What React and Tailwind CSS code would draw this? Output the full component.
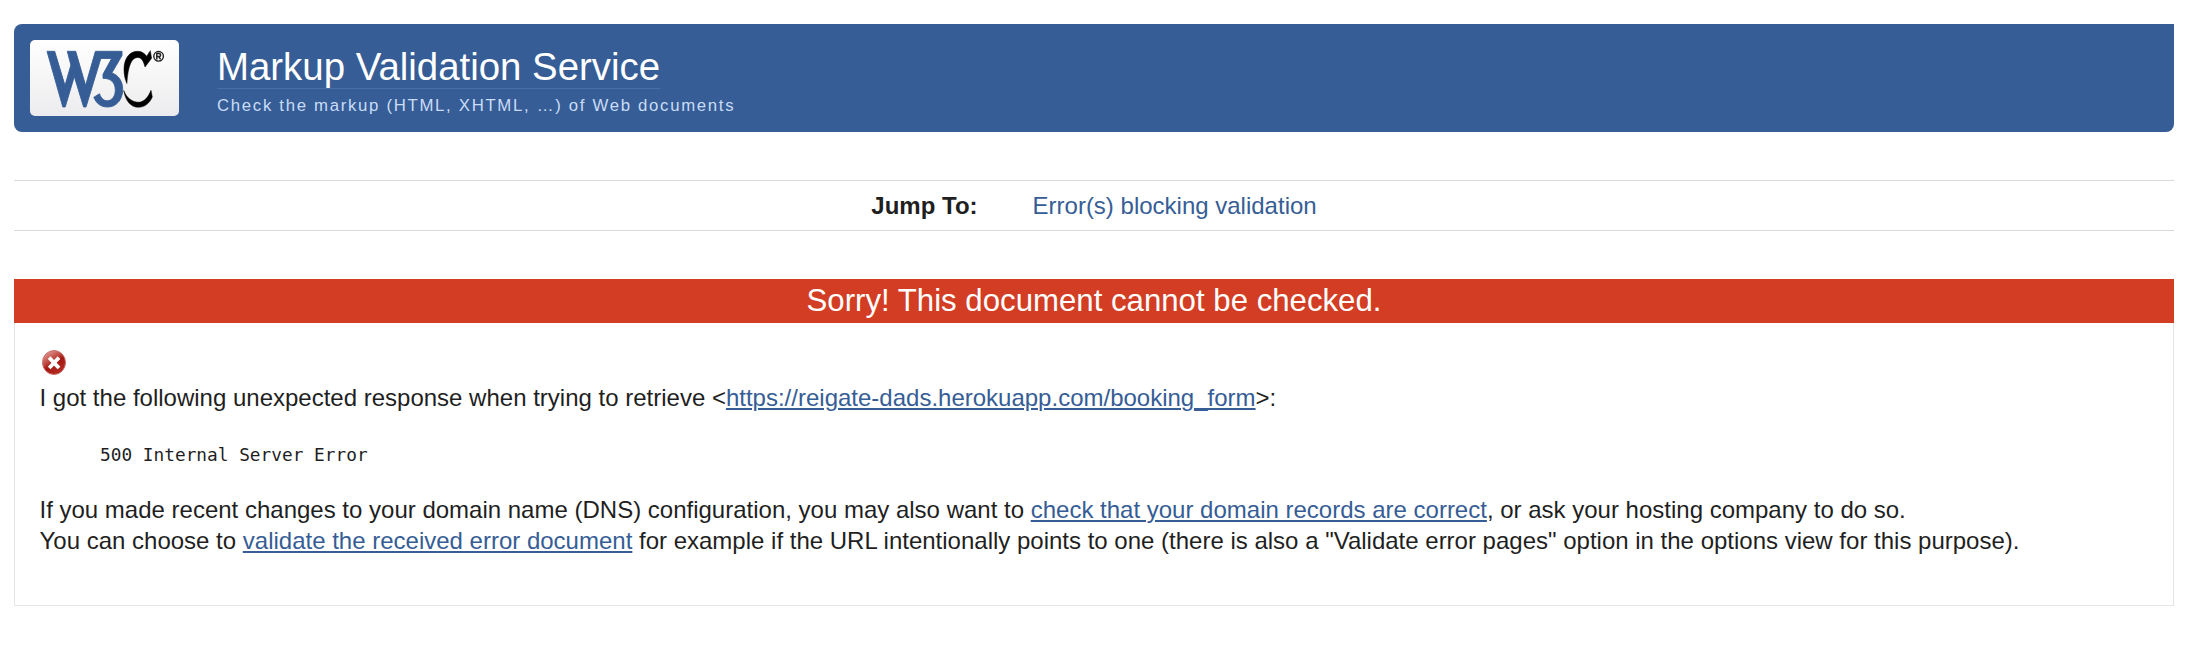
function W3CLogo() {
  return (
    <svg viewBox="0 0 149 76" className="h-[76px] w-[149px] shrink-0" role="img" aria-label="W3C">
      <defs>
        <linearGradient id="plate" x1="0" y1="0" x2="0" y2="1">
          <stop offset="0" stopColor="#ffffff" />
          <stop offset="1" stopColor="#ececee" />
        </linearGradient>
      </defs>
      <rect width="149" height="76" rx="5" fill="url(#plate)" />
      <path
        fill="#365d95"
        stroke="#365d95"
        strokeWidth="0.900"
        strokeLinejoin="round"
        d="M17 11.300H24.700L35 45.500 40.900 25 37.300 11.300H45.700L55.600 45.500 65.400 11.300H92V15.500L81.800 33C88.500 35 92.700 41.500 92.700 49.500 92.700 59.500 86.500 67 77.500 67 71 67 66.500 63.700 63.800 57.300L69.500 53.800C71.200 58.500 73.800 60.800 77.300 60.800 81.800 60.800 85.300 56.300 85.300 50.300 85.300 42.500 81 38.300 73 38.300V34.300L81.600 18.500H70.800L56 67H53.600L44.300 36.500 35.200 67H32.800z"
      />
      <path
        fill="#000"
        stroke="#000"
        strokeWidth="0.500"
        d="M120.300 10.700L121.600 18.300 115 27C113.500 21 111.500 17.500 107.800 17.500 101.500 17.500 98 26 96.900 43.500 94.500 38 94 33.500 94 29 94 18.500 99.500 11.300 107.500 11.300 112 11.300 114.500 13.300 116.700 16.300z"
      />
      <path
        fill="#000"
        stroke="#000"
        strokeWidth="0.500"
        d="M93.700 50.500C97 58.500 102.500 62.200 108.500 62.200 114 62.200 118 57.500 121 50.300L122.300 57C119.500 63.500 114.500 67.300 108.300 67.300 100.500 67.300 95.500 60.500 93.700 50.500z"
      />
      <circle cx="128.600" cy="16.300" r="4.800" fill="none" stroke="#222" strokeWidth="1.400" />
      <path d="M126.800 19.400v-6h2.200a1.500 1.500 0 0 1 0 3.200h-2.200m2 0 1.800 2.800" fill="none" stroke="#222" strokeWidth="1.500" />
    </svg>
  );
}

function ErrorIcon() {
  return (
    <svg viewBox="0 0 24 25" className="h-[25px] w-6" role="img" aria-label="Error">
      <defs>
        <linearGradient id="ball" x1="0.15" y1="0.05" x2="0.7" y2="0.9">
          <stop offset="0" stopColor="#e59a95" />
          <stop offset="0.42" stopColor="#bd4740" />
          <stop offset="0.6" stopColor="#a51712" />
          <stop offset="1" stopColor="#b32a22" />
        </linearGradient>
      </defs>
      <ellipse cx="12" cy="12.500" rx="11.500" ry="12" fill="url(#ball)" stroke="#c9706b" strokeWidth="1" />
      <path d="M8.500 9l7.200 7.600M15.700 9l-7.200 7.600" stroke="#fff" strokeWidth="3.800" strokeLinecap="square" />
    </svg>
  );
}

function TextLink({ children }) {
  return (
    <a href="#" className="text-[#365d95] underline decoration-2 underline-offset-2">
      {children}
    </a>
  );
}

export default function App() {
  return (
    <div className="min-h-[652px] bg-white pt-6 pr-5 pl-3.5 font-['Liberation_Sans',Arial,sans-serif] text-2xl leading-[31px] text-[#1f1f1f]">
      <header className="flex h-[108px] items-start rounded-l-[8px] rounded-br-[8px] bg-[#365d95] pt-4 pl-4">
        <W3CLogo />
        <div className="ml-[38px] flex flex-col items-start">
          <h1 className="mt-1 h-[45px] border-b border-[#4a6fa8] text-[38.4px] leading-[46px] text-white">
            Markup Validation Service
          </h1>
          <p className="mt-[7px] text-[16.8px] leading-5 tracking-[0.1em] text-[#c9dcf8]">
            Check the markup (HTML, XHTML, …) of Web documents
          </p>
        </div>
      </header>

      <nav className="mt-12 flex h-[51px] items-center justify-center gap-[55px] border-y border-[#d9d9d9]">
        <strong>Jump To:</strong>
        <a href="#" className="text-[#365d95]">Error(s) blocking validation</a>
      </nav>

      <main className="mt-12">
        <h2 className="h-11 bg-[#d23d24] text-center text-[31.2px] leading-11 text-white">
          Sorry! This document cannot be checked.
        </h2>
        <section className="h-[283px] border-x border-b border-[#e5e5e5] pl-[24.5px]">
          <div className="pt-[27px] pl-[2.5px]">
            <ErrorIcon />
          </div>
          <p className="mt-[7px]">
            I got the following unexpected response when trying to retrieve &lt;
            <TextLink>https://reigate-dads.herokuapp.com/booking_form</TextLink>&gt;:
          </p>
          <pre className="mt-[26px] pl-[60.5px] font-['DejaVu_Sans_Mono',monospace] text-[17.8px] leading-[31px]">
            500 Internal Server Error
          </pre>
          <p className="mt-6">
            If you made recent changes to your domain name (DNS) configuration, you may also want to{" "}
            <TextLink>check that your domain records are correct</TextLink>, or ask your hosting company to do so.
          </p>
          <p>
            You can choose to <TextLink>validate the received error document</TextLink> for example if the URL
            intentionally points to one (there is also a "Validate error pages" option in the options view for this
            purpose).
          </p>
        </section>
      </main>
    </div>
  );
}
